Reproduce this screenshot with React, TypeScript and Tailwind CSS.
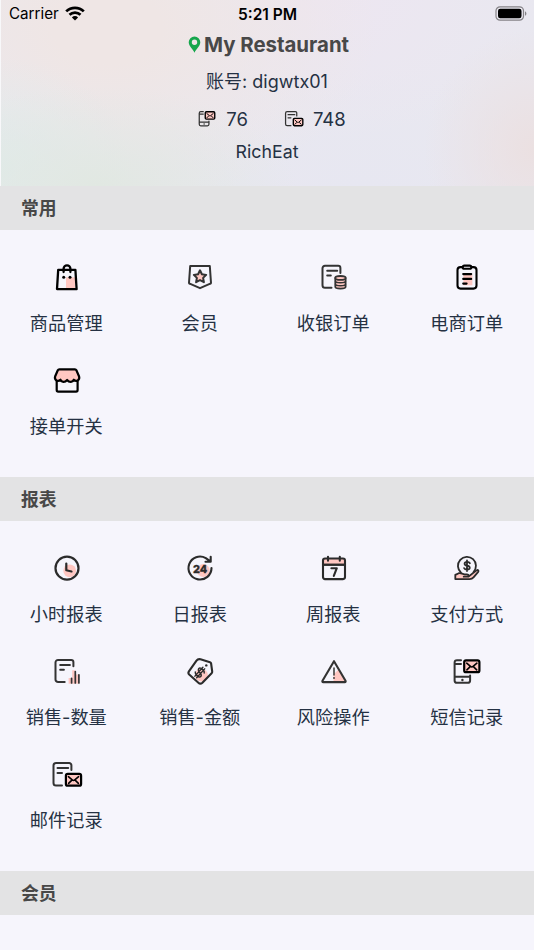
import type { ReactNode } from "react";

const PINK = "#ffc7c2";

function Glyph({
  children,
  color = "#2b2b2b",
  width = 2,
  className = "size-8",
}: {
  children: ReactNode;
  color?: string;
  width?: number;
  className?: string;
}) {
  return (
    <svg
      viewBox="0 0 32 32"
      className={`shrink-0 ${className}`}
      fill="none"
      stroke={color}
      strokeWidth={width}
      strokeLinecap="round"
      strokeLinejoin="round"
    >
      {children}
    </svg>
  );
}

const BagIcon = () => (
  <Glyph color="#000" width={2.3}>
    <path d="M15 15.3h9V26h-9z" fill={PINK} stroke="none" />
    <path d="M7.2 7.8h17.200l1.200 19.300H6z" />
    <path d="M12.600 10V6.700a3.400 3.400 0 0 1 6.800 0V10" />
    <circle cx="12.700" cy="15.300" r="1.500" fill="#000" stroke="none" />
    <circle cx="19" cy="15.300" r="1.500" fill="#000" stroke="none" />
  </Glyph>
);

const BadgeIcon = () => (
  <Glyph color="#333" width={2}>
    <path d="M6.200 4h19.600l1.200 16.700c0 .5-.2.800-.7 1L16 26.200 5.700 21.700c-.5-.2-.7-.5-.7-1z" />
    <path d="m16 8.300 1.900 4 4.300.6-3.100 3 .8 4.300-3.900-2.100-3.900 2.100.8-4.300-3.100-3 4.300-.6z" fill={PINK} />
  </Glyph>
);

const CashierIcon = () => (
  <Glyph color="#333">
    <path d="M13.500 25.800H7a2.500 2.500 0 0 1-2.500-2.500V6.300A2.500 2.500 0 0 1 7 3.800h13.200a2.200 2.200 0 0 1 2.200 2.200v5" />
    <path d="M9.200 8.800h10M9.200 13.500h3.600" />
    <g strokeWidth="1.800">
      <path d="M17.300 16v8.800c0 2.400 10.300 2.400 10.300 0V16" fill={PINK} />
      <ellipse cx="22.450" cy="15.900" rx="5.150" ry="1.900" fill={PINK} />
      <path d="M17.500 19.200c0 2 10 2 10 0M17.500 22.200c0 2 10 2 10 0" strokeWidth="1.400" />
    </g>
  </Glyph>
);

const ClipboardIcon = () => (
  <Glyph color="#000" width={2.100}>
    <path d="M12.400 12.500h9v10.800h-9z" fill={PINK} stroke="none" />
    <path d="M11.500 5.100H9.500a3 3 0 0 0-3 3v15.500a3 3 0 0 0 3 3h13a3 3 0 0 0 3-3V8.100a3 3 0 0 0-3-3h-2" />
    <rect x="11.700" y="3.600" width="8.600" height="3.200" rx="1.600" />
    <path d="M12.200 12.100h8M12.200 16.900h8M12.200 21.600h3.400" />
  </Glyph>
);

const ShopIcon = () => (
  <Glyph color="#000" width={2.200}>
    <path d="M5.700 15.500v9.600c0 .9.600 1.500 1.500 1.500h17.900c.9 0 1.500-.6 1.500-1.500v-9.600" />
    <path
      d="M8.300 4.400h15.600c.7 0 1.200.3 1.500.9L28.100 11.500c.9 3-2.500 6-5.300 3.200-.9 2.800-4.500 3.100-6.700.3-2.200 2.800-5.800 2.500-6.700-.3-2.800 2.800-6.200-.2-5.300-3.200l2.700-6.200c.3-.6.800-.9 1.500-.9z"
      fill={PINK}
    />
  </Glyph>
);

const ClockIcon = () => (
  <Glyph width={2.200}>
    <circle cx="18.700" cy="17.800" r="6.400" fill={PINK} stroke="none" />
    <circle cx="16" cy="15.200" r="11.500" />
    <path d="M15.300 10.500v6.700l5.200 1.300" />
  </Glyph>
);

const DayIcon = () => (
  <Glyph width={2.100}>
    <circle cx="19.300" cy="17.500" r="6.500" fill={PINK} stroke="none" />
    <path d="M27.500 15A11.500 11.500 0 1 1 21.800 5.100L26 8.200M26.700 3.800v4.900h-5.200" />
    <text x="16" y="19.800" textAnchor="middle" fontFamily="Inter, sans-serif" fontSize="10.800" fontWeight="800" fill="#2b2b2b" stroke="#2b2b2b" strokeWidth=".3">24</text>
  </Glyph>
);

const WeekIcon = () => (
  <Glyph width={2.100}>
    <path d="M5 11.700V7.500a2 2 0 0 1 2-2h18a2 2 0 0 1 2 2v4.200z" fill={PINK} />
    <path d="M5 11.700h22v12.400a2 2 0 0 1-2 2H7a2 2 0 0 1-2-2z" />
    <path d="M10 3.800v4M21.800 3.800v4" />
    <path d="M13.400 15.200h5.400l-3 7.700" />
  </Glyph>
);

const PayIcon = () => (
  <Glyph width={1.800}>
    <path d="M4.300 26.100v-4.200l3.500-1.700c2.500-.6 3.500 1.100 6 1.200h2.200c2 0 2 2.300 0 2.300h-3.300 4.600l8.200-6.300c1.600-1 2.500.2 1.700 1.400l-4.700 5.500c-1 1.200-2 1.800-3.700 1.800z" fill={PINK} />
    <path d="M10 19.600A9 9 0 1 1 22.500 19" />
    <path d="M18.900 10.300c-.5-.9-1.400-1.400-2.700-1.400-3.400 0-3.500 3.200-.3 3.800 4 .5 3.600 3.900.1 3.900-1.400 0-2.400-.5-2.900-1.500M16 7.500v10.500" />
  </Glyph>
);

const QuantityIcon = () => (
  <Glyph color="#333" width={2}>
    <path d="M17.600 22h3v5.700h-3zM21.200 14.200h3v13.500h-3zM24.800 18.500h3v9.200h-3z" fill={PINK} stroke="none" />
    <path d="M13.700 26H7.100a2.600 2.600 0 0 1-2.600-2.600V6.500a2.600 2.600 0 0 1 2.600-2.600h13.100a2.200 2.200 0 0 1 2.200 2.200v4.200" />
    <path d="M9.200 9h9.700M9.200 13.700h3.700" />
    <path d="M20.600 22.300v4.700M24.300 15.500V27M27.900 18.800V27" strokeWidth="1.700" />
  </Glyph>
);

const AmountIcon = () => (
  <Glyph width={2.100}>
    <circle cx="17.300" cy="19" r="6.500" fill={PINK} stroke="none" />
    <path d="M16.500 3.300 26 6.200c.7.200 1 .6 1.100 1.300l1.100 8c.1.700-.1 1.200-.6 1.700l-9.200 9.500c-1.300 1.200-2.800 1.200-4 0l-9.200-8.200c-1-1-1.100-2-.3-3.200l7.600-10.600c1-1.400 2.100-1.900 4-1.400z" />
    <circle cx="22.300" cy="9.400" r="1.200" fill="#2b2b2b" stroke="none" />
    <g transform="translate(15.800 16.500) rotate(42)" strokeWidth="1.400">
      <path d="M3.600-2.600C2.800-3.800 1.600-4.200 0-4.200c-4.500 0-4.600 3.600 0 4.200 4.600.5 4.500 4.200 0 4.200-1.800 0-3-.5-3.700-1.500M-1.200-6v12M1.200-6v12" />
    </g>
  </Glyph>
);

const RiskIcon = () => (
  <Glyph color="#333" width={2.100}>
    <path d="m15.500 18.500 5-5L27.500 26h-12z" fill={PINK} stroke="none" />
    <path d="M16 5.200 27.500 24.800c.4.800.1 1.300-.7 1.300H5.200c-.8 0-1.100-.5-.7-1.300z" />
    <path d="M16 12v7" strokeWidth="1.500" />
    <circle cx="16" cy="22" r=".9" fill="#333" stroke="none" />
  </Glyph>
);

const Envelope = ({ x, y }: { x: number; y: number }) => (
  <g transform={`translate(${x} ${y})`} stroke="#000">
    <rect width="15.200" height="11.800" rx="1.800" fill={PINK} strokeWidth="2.200" />
    <path d="m2.500 2.800 3.800 3.200c.9.800 1.700.8 2.600 0l3.800-3.200M2.700 9.500l2.800-2.800M12.500 9.500 9.700 6.700" strokeWidth="1.600" />
  </g>
);

const SmsIcon = ({ className }: { className?: string }) => (
  <Glyph color="#333" width={2} className={className}>
    <path d="M10 4.200H6A2.400 2.400 0 0 0 3.600 6.600v17.800A2.400 2.400 0 0 0 6 26.800h10.700a2.400 2.400 0 0 0 2.400-2.400v-5M3.600 20.800h15.500M4.500 8.100H10" />
    <circle cx="11.400" cy="24" r="1.200" fill="#333" stroke="none" />
    <Envelope x={13.200} y={4.400} />
  </Glyph>
);

const MailIcon = ({ className }: { className?: string }) => (
  <Glyph color="#333" width={2} className={className}>
    <path d="M11 26.600H5A2.500 2.500 0 0 1 2.500 24.100V6.600A2.500 2.500 0 0 1 5 4.100h13.200a2.200 2.200 0 0 1 2.200 2.200v4.700M6.500 9h10.700M6.500 14h4.500" />
    <Envelope x={14.900} y={14.900} />
  </Glyph>
);

type Entry = { label: string; icon: ReactNode };

const COMMON: Entry[] = [
  { label: "商品管理", icon: <BagIcon /> },
  { label: "会员", icon: <BadgeIcon /> },
  { label: "收银订单", icon: <CashierIcon /> },
  { label: "电商订单", icon: <ClipboardIcon /> },
  { label: "接单开关", icon: <ShopIcon /> },
];

const REPORTS: Entry[] = [
  { label: "小时报表", icon: <ClockIcon /> },
  { label: "日报表", icon: <DayIcon /> },
  { label: "周报表", icon: <WeekIcon /> },
  { label: "支付方式", icon: <PayIcon /> },
  { label: "销售-数量", icon: <QuantityIcon /> },
  { label: "销售-金额", icon: <AmountIcon /> },
  { label: "风险操作", icon: <RiskIcon /> },
  { label: "短信记录", icon: <SmsIcon /> },
  { label: "邮件记录", icon: <MailIcon /> },
];

function Section({ title, entries }: { title: string; entries: Entry[] }) {
  return (
    <section>
      <h2 className="flex h-11 items-center bg-[#e3e3e4] pt-0.5 pl-[21px] text-[17.800px] font-bold text-[#484848]">{title}</h2>
      {entries.length > 0 && (
        <div className="grid grid-cols-4 pb-[41px]">
          {entries.map((e) => (
            <div key={e.label} className="flex h-[103px] flex-col items-center pt-8">
              {e.icon}
              <span className="mt-[15px] -ml-px text-[18.200px] leading-7">{e.label}</span>
            </div>
          ))}
        </div>
      )}
    </section>
  );
}

function StatusBar() {
  return (
    <div className="grid h-7 grid-cols-3 items-center text-black">
      <div className="flex items-center gap-[6px] pt-px pl-2 text-[15.200px]">
        Carrier
        <svg viewBox="0 0 20 15" className="h-[15px] w-5 -translate-y-px" fill="none" stroke="#000" strokeWidth="2.700">
          <path d="M1.200 5.400a12.500 12.500 0 0 1 17.600 0M4.500 8.800a7.800 7.800 0 0 1 11 0" />
          <path d="M10 14.600 6.900 11.400a4.400 4.400 0 0 1 6.200 0z" fill="#000" stroke="none" />
        </svg>
      </div>
      <div className="pt-px text-center text-[15.500px] font-semibold">5:21 PM</div>
      <div className="flex justify-end pr-[7px]">
        <svg viewBox="0 0 32 15" className="h-[15px] w-8 -translate-y-px">
          <rect x="1" y=".8" width="27.500" height="13.400" rx="4" fill="none" stroke="#858387" strokeWidth="1.200" />
          <rect x="3" y="2.700" width="23.500" height="9.600" rx="2.200" />
          <path d="M30 5.200c1.900.8 1.900 3.800 0 4.600z" fill="#858387" />
        </svg>
      </div>
    </div>
  );
}

export default function App() {
  return (
    <main className="h-[950px] w-[534px] overflow-hidden bg-[#f6f5fc] font-[Inter,'Noto_Sans_CJK_SC',sans-serif] text-[#253143]">
      <header className="h-[186px] border-l border-[#f8f8fa] bg-[#e9e8f0] bg-[radial-gradient(ellipse_110px_120px_at_100%_80%,#ebe0e1_0%,transparent_100%),radial-gradient(ellipse_200px_100px_at_18%_100%,#e1e8e2_0%,transparent_100%),radial-gradient(ellipse_130px_110px_at_0%_90%,#e0ebeb_0%,transparent_100%),radial-gradient(ellipse_270px_180px_at_20%_15%,#efe6e5_20%,transparent_100%),radial-gradient(ellipse_220px_140px_at_60%_0%,#ede6f1_0%,transparent_100%),radial-gradient(ellipse_220px_120px_at_68%_100%,#e7e7f1_0%,transparent_100%)]">
        <StatusBar />
        <div className="flex h-[34px] items-center justify-center gap-[3px] pl-[2px] text-[20.400px] font-bold text-[#484848]">
          <svg viewBox="0 0 13 17" className="h-[17px] w-[13px] -translate-y-px">
            <path fillRule="evenodd" fill="#16a64c" d="M6.500.5A5.800 5.800 0 0 0 .7 6.300C.7 10 4.800 13 6.500 16.700 8.200 13 12.300 10 12.300 6.300A5.800 5.800 0 0 0 6.500.5zm0 3a2.700 2.700 0 1 1 0 5.400 2.700 2.700 0 0 1 0-5.400z" />
          </svg>
          My Restaurant
        </div>
        <div className="flex h-[38px] items-center justify-center pr-px text-[18px]">账号: digwtx01</div>
        <div className="flex h-[38px] items-center justify-center gap-9 pt-px pl-2 text-[18.500px]">
          <div className="flex items-center gap-[9px]">
            <SmsIcon className="size-5 -translate-y-px" />
            <span>76</span>
          </div>
          <div className="flex items-center gap-[9px]">
            <MailIcon className="size-5 -translate-y-px" />
            <span>748</span>
          </div>
        </div>
        <div className="flex h-[29px] items-center justify-center pr-px text-[17.800px]">RichEat</div>
      </header>
      <Section title="常用" entries={COMMON} />
      <Section title="报表" entries={REPORTS} />
      <Section title="会员" entries={[]} />
    </main>
  );
}
